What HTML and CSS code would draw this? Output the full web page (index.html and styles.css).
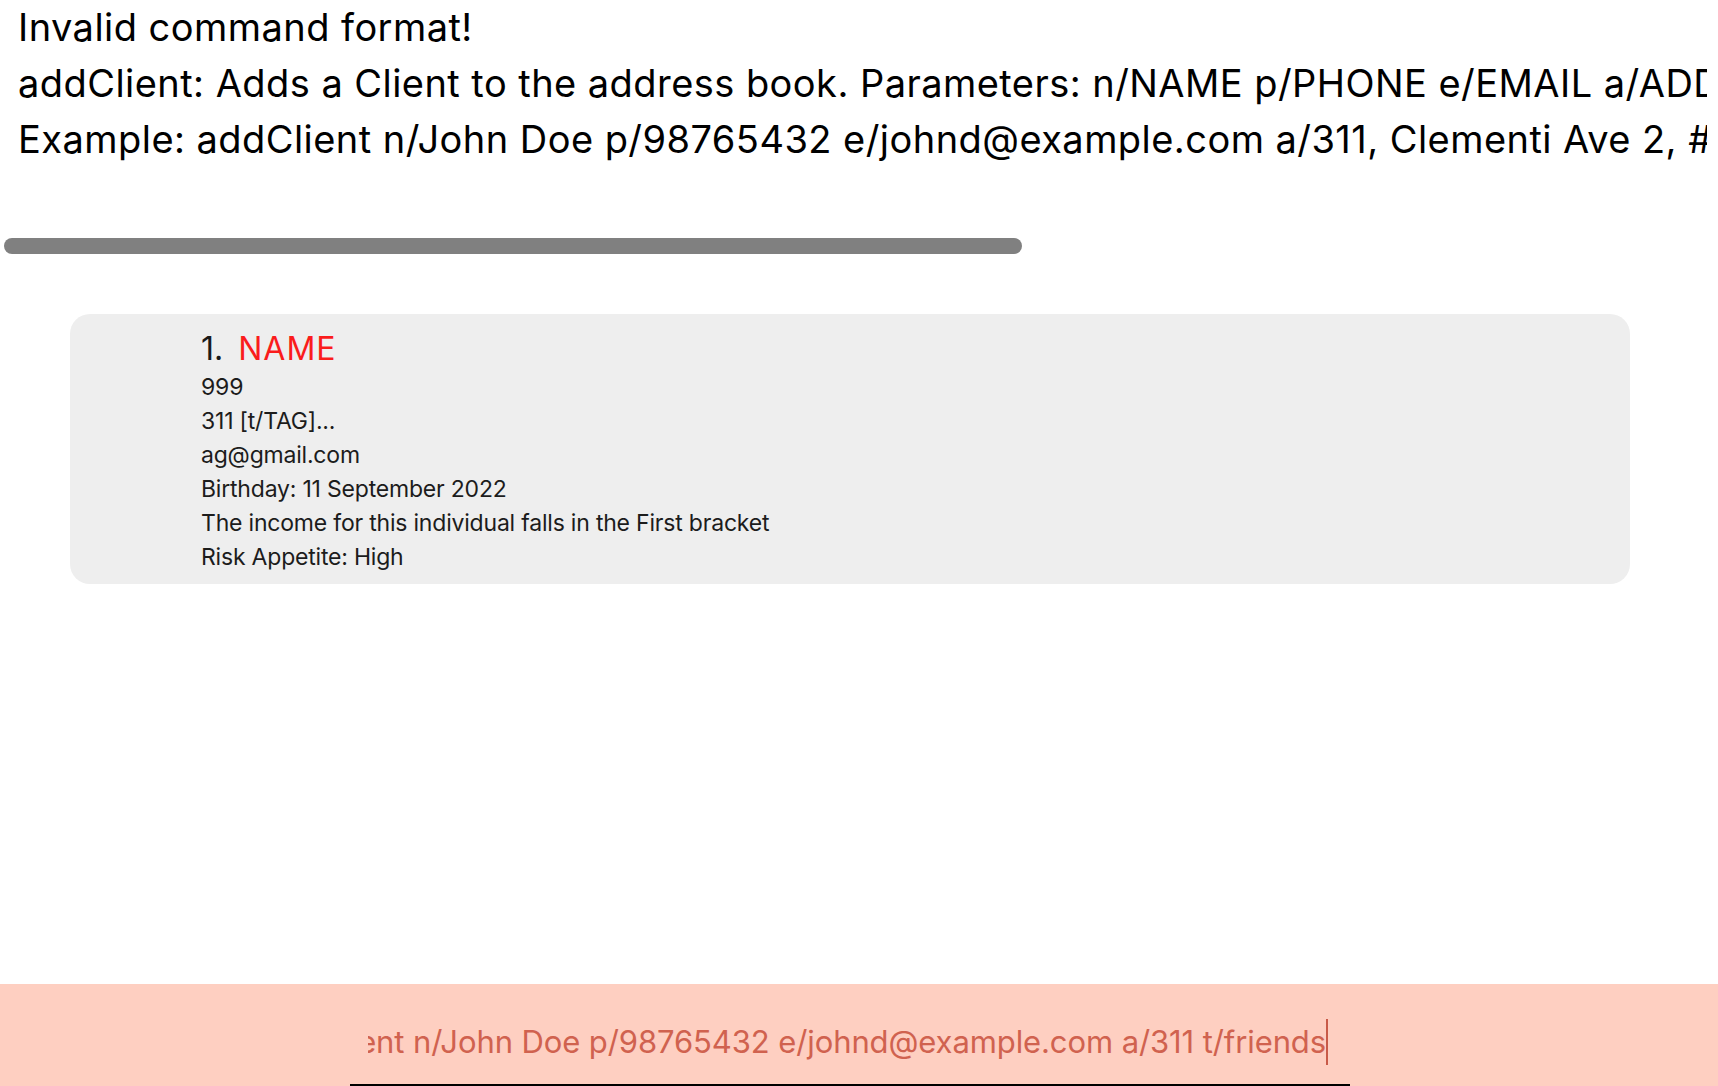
FILE: index.html
```html
<!DOCTYPE html>
<html lang="en">
<head>
<meta charset="utf-8">
<title>Address Book</title>
<link rel="stylesheet" href="styles.css">
</head>
<body>
<div class="app">
  <main class="main">
    <section class="result">
      <div class="result-text">
        <div class="result-line">Invalid command format!</div>
        <div class="result-line">addClient: Adds a Client to the address book. Parameters: n/NAME p/PHONE e/EMAIL a/ADDRESS [b/BIRTHDAY] [i/INCOME] [ra/RISK_APPETITE] [t/TAG]...</div>
        <div class="result-line">Example: addClient n/John Doe p/98765432 e/johnd@example.com a/311, Clementi Ave 2, #02-25 t/friends t/owesMoney</div>
      </div>
      <div class="hscroll"><div class="hscroll-thumb"></div></div>
    </section>
    <section class="list">
      <article class="card">
        <div class="card-title"><span class="card-id">1.</span><span class="card-name">NAME</span></div>
        <div class="card-line">999</div>
        <div class="card-line">311 [t/TAG]...</div>
        <div class="card-line">ag@gmail.com</div>
        <div class="card-line">Birthday: 11 September 2022</div>
        <div class="card-line">The income for this individual falls in the First bracket</div>
        <div class="card-line">Risk Appetite: High</div>
      </article>
    </section>
  </main>
  <footer class="command-bar">
    <div class="command-box">
      <div class="command-viewport">
        <span class="command-text">addClient n/John Doe p/98765432 e/johnd@example.com a/311 t/friends</span><span class="caret"></span>
      </div>
    </div>
  </footer>
</div>
</body>
</html>
```

FILE: styles.css
```css
html, body {
  margin: 0;
  padding: 0;
  background: #ffffff;
  overflow: hidden;
}

body {
  font-family: Inter, "Noto Sans", "Liberation Sans", sans-serif;
  color: #000000;
}

.app {
  width: 1718px;
  height: 1086px;
  display: flex;
  flex-direction: column;
}

.main {
  flex: 1;
  display: flex;
  flex-direction: column;
  min-height: 0;
}

.result {
  width: 1707px;
  overflow: hidden;
}

.result-text {
  padding-left: 18px;
  margin-top: -1px;
}

.result-line {
  font-size: 38px;
  line-height: 56px;
  letter-spacing: 0.45px;
  white-space: nowrap;
  color: #000000;
}

.hscroll {
  margin-top: 71px;
  padding-left: 4px;
  height: 16px;
}

.hscroll-thumb {
  width: 1018px;
  height: 16px;
  border-radius: 8px;
  background: #808080;
}

.list {
  margin-top: 60px;
  padding-left: 70px;
}

.card {
  width: 1560px;
  box-sizing: border-box;
  background: #eeeeee;
  border-radius: 20px;
  padding: 13px 20px 10px 131px;
}

.card-title {
  display: flex;
  align-items: baseline;
  gap: 15px;
  font-size: 32px;
  line-height: 43px;
}

.card-id {
  color: #1a1a1a;
}

.card-name {
  color: #fa1c1c;
  letter-spacing: 1px;
}

.card-line {
  font-size: 23px;
  line-height: 34px;
  letter-spacing: -0.2px;
  color: #1c1c1c;
  white-space: nowrap;
}

.command-bar {
  height: 102px;
  box-sizing: border-box;
  background: #fecfc1;
  padding-top: 35px;
  padding-left: 350px;
}

.command-box {
  width: 1000px;
  box-sizing: border-box;
  padding: 0 22px 19px 18px;
  border-bottom: 2px solid #000000;
}

.command-viewport {
  display: flex;
  justify-content: flex-end;
  overflow: hidden;
}

.command-text {
  flex-shrink: 0;
  white-space: nowrap;
  font-size: 31px;
  line-height: 46px;
  letter-spacing: -0.1px;
  color: #d0624f;
}

.caret {
  flex-shrink: 0;
  width: 2px;
  height: 46px;
  background: #c85a48;
}
```
